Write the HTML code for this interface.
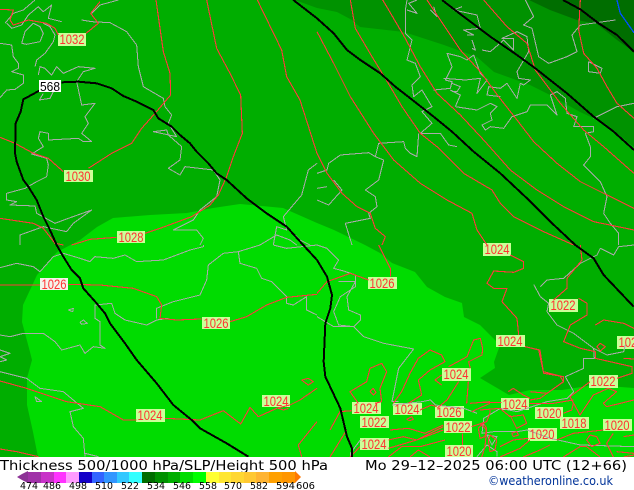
<!DOCTYPE html>
<html><head><meta charset="utf-8"><style>
html,body{margin:0;padding:0;background:#fff;width:634px;height:490px;overflow:hidden}
svg{display:block}
.f{font-family:"Liberation Sans",sans-serif}
.d{font-family:"DejaVu Sans",sans-serif}
.r polyline{fill:none;stroke:#ff3a3a;stroke-width:3.3;stroke-linejoin:round;shape-rendering:crispEdges}
.g polyline{fill:none;stroke:#aaaaaa;stroke-width:3.1;stroke-linejoin:round;shape-rendering:crispEdges}
.k polyline{fill:none;stroke:#000;stroke-width:6;stroke-linejoin:round;shape-rendering:crispEdges}
.l text{fill:#ff3232;font-size:13.5px}
</style></head><body>
<svg width="634" height="490" viewBox="0 0 634 490" xmlns="http://www.w3.org/2000/svg" class="f">
<defs><clipPath id="m"><rect x="0" y="0" width="634" height="457"/></clipPath></defs>
<rect width="634" height="490" fill="#fff"/>
<g clip-path="url(#m)">
<rect width="634" height="457" fill="#00ae00"/>
<polygon fill="#009200" points="295,0 317,8 337,12 352,20 360,27 404,32 444,45 477,57 494,72 530,85 550,95 580,112 604,123 634,147 634,0"/>
<polygon fill="#006e00" points="529,0 550,10 577,20 597,24 617,40 634,52 634,0"/>
<polygon fill="#00dc00" points="80,240 97,227 113,218 150,215 187,213 213,208 240,204 283,208 317,223 334,230 365,245 380,253 392,263 415,272 427,287 445,297 462,303 464,317 480,325 500,345 494,362 495,368 480,378 509,395 530,390 562,390 594,385 634,388 634,457 38,457 33,432 27,405 27,378 32,360 30,352 22,322 23,305 37,275 57,252"/>

<!-- label boxes -->
<g fill="#ccff99">
<rect x="58" y="33" width="28" height="13"/><rect x="64" y="170" width="29" height="12"/><rect x="117" y="231" width="28" height="12"/>
<rect x="40" y="278" width="28" height="12" fill="#f4f4ea"/><rect x="202" y="317" width="28" height="12"/><rect x="136" y="409" width="29" height="13"/>
<rect x="262" y="395" width="28" height="12"/><rect x="368" y="277" width="29" height="12"/><rect x="483" y="243" width="28" height="13"/>
<rect x="549" y="299" width="29" height="13"/><rect x="496" y="335" width="29" height="12"/><rect x="617" y="336" width="17" height="13"/>
<rect x="589" y="375" width="29" height="13"/><rect x="442" y="368" width="29" height="13"/><rect x="352" y="402" width="29" height="12"/>
<rect x="393" y="403" width="29" height="12"/><rect x="360" y="416" width="29" height="12"/><rect x="435" y="406" width="29" height="12"/>
<rect x="501" y="398" width="28" height="12"/><rect x="535" y="407" width="28" height="12"/><rect x="560" y="417" width="29" height="12"/>
<rect x="603" y="419" width="29" height="12"/><rect x="528" y="428" width="29" height="13"/><rect x="444" y="421" width="28" height="12"/>
<rect x="360" y="438" width="29" height="12"/><rect x="445" y="445" width="28" height="12"/>
</g>

<!-- coast Q1 -->
<g class="g" transform="scale(.33333)">
<polyline points="15,70 40,40 70,30 105,0"/>
<polyline points="20,70 35,85 65,75 85,45 115,20 130,35 155,15 145,55 185,65"/>
<polyline points="65,130 75,95 100,70 120,80 130,100 120,125 80,133 65,130"/>
<polyline points="105,200 110,180 135,160 160,125 165,105 150,80 130,70"/>
<polyline points="115,225 120,200 135,205 155,225 170,200 190,220 235,200 285,205 250,215 230,245 245,315 285,310 255,350 265,370 245,400 275,425 250,425 235,415 145,420 145,400 120,395 115,415 130,440 95,462 140,475 145,495 140,530 110,545 75,565 20,580 20,600 50,605 30,615 105,618 110,640 165,670 205,655 275,630 220,670 200,695 130,680 60,705 60,735"/>
<polyline points="0,130 35,135 40,170 55,190 55,205 35,215 70,225 70,250 45,268 20,270 0,293"/>
<polyline points="130,280 118,300 150,295 160,275"/>
<polyline points="245,60 275,65 330,68 380,95 410,135 415,200 430,260 490,295 495,320 515,345 505,370 530,410 460,395 500,390 505,405 545,440 540,480 505,505 540,525 555,500 640,510 660,540 650,590 600,630 580,660 520,690 590,690 610,715 600,735"/>
<polyline points="275,40 300,15 355,0"/>
<polyline points="951,490 925,510 905,585 850,650 860,690 830,680 820,735"/>
<polyline points="780,735 830,705 870,720 890,735"/>
<polyline points="870,690 900,720 930,735"/>
</g>
<!-- coast Q2 -->
<g class="g" transform="translate(317,0) scale(.33333)">
<polyline points="270,0 265,30 265,100 285,120 270,180 295,190 310,230 285,255 290,290 315,270 345,320 315,335 345,370 310,400 370,400 395,435 420,440"/>
<polyline points="305,400 300,470 280,460 265,445 260,425 185,430 175,470 200,480 185,540 145,570 175,590 180,620 155,640 160,655 85,670 105,735"/>
<polyline points="175,470 155,458 70,465 35,490 30,510 0,520"/>
<polyline points="50,540 75,570 35,615 0,600"/><polyline points="0,565 30,560"/>
<polyline points="270,30 300,40 275,10 300,0"/><polyline points="340,30 360,50 350,20"/>
<polyline points="350,270 400,265 405,245 385,240 405,200 390,160 430,170 450,180 470,165"/>
<polyline points="405,250 430,260 420,275 405,275"/>
<polyline points="415,320 430,285 400,270"/>
<polyline points="415,320 480,330 520,310 540,320 520,340 525,360 495,375 505,390 520,380 560,385 585,350 630,335 640,315 690,315 720,345 700,285 720,275 745,295 750,340 780,350 770,380 830,380 830,395 805,400 820,440 820,470 800,495 850,545 870,590 860,640 880,670 905,700 905,735"/>
<polyline points="435,20 410,30 480,45 490,85 440,90 470,105 450,105"/>
<polyline points="465,120 475,150 465,145"/>
<polyline points="495,150 520,155 560,120 590,150 590,115 555,115 600,95 630,110 635,155 600,215 605,235 640,240 620,255 610,250 600,295 570,250 550,265 515,260 510,285 550,290"/>
<polyline points="470,165 490,220 510,240 480,280 490,235 445,240 380,235"/>
<polyline points="625,0 650,50 620,75 645,85 665,170 695,190 750,170 780,155 765,105 790,75 860,65 895,60"/>
<polyline points="830,355 900,320 951,310"/>
<polyline points="815,185 815,215 850,220 855,205 815,185"/>
</g>
<!-- coast Q3 -->
<g class="g" transform="translate(0,245) scale(.33333)">
<polyline points="0,68 50,55 100,65 120,80 160,35 190,25 240,40 270,50 285,35 340,40 375,30 410,50 490,45 570,15 610,5 610,0"/>
<polyline points="0,270 30,275 70,265 130,265 165,290 185,315 240,300 255,325 280,305 315,310 300,300 300,230 285,220 285,180 335,175 345,205 375,225 440,240 470,225 505,220"/>
<polyline points="470,220 470,190 520,170 600,150 620,105 625,60 670,25 715,20 720,55 770,70 785,100 815,110 860,155 860,175 880,180 920,155 920,195 951,210"/>
<polyline points="205,195 220,190 218,200 205,195"/><polyline points="240,232 250,225 262,235 245,238 240,232"/>
<polyline points="0,315 30,325 0,335 20,345 0,350"/>
<polyline points="0,380 80,400 120,430 190,440 250,490 210,500 220,545 250,580 255,635"/>
<polyline points="105,455 125,470 110,470 105,455"/><polyline points="255,625 295,635"/>
<polyline points="715,20 780,0"/><polyline points="820,0 860,10 951,0"/>
</g>
<!-- coast Q4 -->
<g class="g" transform="translate(317,245) scale(.33333)">
<polyline points="0,215 50,245 110,245 130,225 130,210 95,195 90,155 115,110 65,110"/>
<polyline points="0,0 30,10 65,45 50,70 80,78 115,90 115,125 70,155 50,200 65,240 110,245 140,275 200,295 290,312 245,370 225,470 245,470"/>
<polyline points="650,118 670,155 695,175 690,200 720,240 770,265 830,310 832,340 800,340 800,370 745,395 770,440 750,460 690,470 600,500 550,490 500,520 495,565 530,560 600,560 630,555 700,580 790,600 951,605"/>
<polyline points="480,635 510,600 540,620 540,635"/>
<polyline points="670,125 690,105 740,100 790,55 840,30 850,10 890,30 905,5 951,0"/>
<polyline points="830,310 870,330 920,320 925,300"/>
<polyline points="225,480 315,470 340,465 355,480 440,490 480,505"/>
<polyline points="130,585 100,625 100,635"/><polyline points="510,570 525,600 540,575 510,570"/>
</g>

<!-- red Q1 -->
<g class="r" transform="scale(.33333)">
<polyline points="0,28 40,30 30,60 40,75 85,60 140,70 165,85 175,105"/>
<polyline points="258,100 295,70 272,40 300,5"/>
<polyline points="468,0 490,155 510,220 512,285 465,340 425,385 395,430 335,460 265,505"/>
<polyline points="190,515 145,475 100,460 45,430 0,412"/>
<polyline points="620,0 650,145 690,220 722,285 727,400 700,470 680,530 655,585 630,615 575,650 480,685 435,700"/>
<polyline points="350,712 270,718 215,735"/>
<polyline points="772,0 845,150 860,230 900,300 951,460"/>
<polyline points="0,655 100,670 130,685 165,730 190,735"/>
</g>
<!-- red Q2 -->
<g class="r" transform="translate(317,0) scale(.33333)">
<polyline points="0,95 50,190 100,290 170,400 230,480 310,550 390,600 465,640 480,690 510,735"/>
<polyline points="100,0 115,85 165,170 205,235 255,320 310,400 360,440 440,520 525,570 550,610 590,650 680,695 770,735"/>
<polyline points="197,0 215,30 262,110 310,200 360,280 430,345 500,420 580,510 660,570 740,620 830,665 951,690"/>
<polyline points="330,0 430,150 490,215 545,290 600,360 650,425 720,490 790,545 860,580 951,625"/>
<polyline points="500,0 570,80 630,130 655,210 730,310 800,390 860,440 951,520"/>
<polyline points="790,0 785,90 800,160 840,205 870,260 900,310 951,355"/>
<polyline points="0,460 30,520 75,580 120,620 160,640 175,685 205,710 195,735"/>
</g>
<!-- red Q3 -->
<g class="r" transform="translate(0,245) scale(.33333)">
<polyline points="0,120 120,120"/>
<polyline points="205,118 300,120 400,130 470,155 485,180 480,220 530,225 605,222"/>
<polyline points="690,230 740,215 800,180 860,157 951,148"/>
<polyline points="0,408 80,430 200,470 300,485 370,525 410,525"/>
<polyline points="495,520 600,525 670,497 722,537 750,487 775,515 830,490 870,480 900,465 951,430"/>
<polyline points="835,490 850,495 865,490"/>
<polyline points="0,612 50,620 115,635"/>
<polyline points="951,530 895,600 905,635"/>
<polyline points="905,405 925,400 940,410 925,420 905,405"/>
</g>
<!-- red Q4 -->
<g class="r" transform="translate(317,245) scale(.33333)">
<polyline points="185,0 220,70 220,95"/>
<polyline points="0,145 30,110 100,85 155,105"/>
<polyline points="580,30 620,50 620,70 590,82 530,78 510,115 530,130 570,130 555,170 600,220 605,270"/>
<polyline points="625,305 665,315 680,385 740,395 740,410 690,445 640,440"/>
<polyline points="790,0 795,45 750,100 750,130 710,165"/>
<polyline points="785,160 810,175 810,210 760,240 740,290 790,310 835,320 835,340 945,365 945,385 900,400"/>
<polyline points="835,240 860,225 920,235 951,250"/>
<polyline points="850,295 865,305 850,318 840,305 850,295"/>
<polyline points="951,342 920,340"/>
<polyline points="395,365 450,335 470,285 490,280 497,310 495,330 455,350 460,370"/>
<polyline points="425,410 390,465 360,490"/>
</g>
<!-- red zoom 7 -->
<g class="r" transform="translate(330,340) scale(.33333)">
<polyline points="0,270 30,215 65,212"/>
<polyline points="85,190 60,155 110,125 120,85 155,70 170,95 150,145 155,185 135,190"/>
<polyline points="120,155 130,145 138,158 130,165 120,155"/>
<polyline points="190,190 215,155 240,100 265,55 300,30 335,45 345,65 300,90 265,120 275,165 235,190"/>
<polyline points="335,105 315,120 335,135"/>
<polyline points="415,125 410,190"/>
<polyline points="175,325 260,300 340,270"/>
<polyline points="180,270 235,265 285,280 340,255"/>
<polyline points="175,300 220,290 260,300 340,260"/>
<polyline points="240,351 265,330 300,351"/>
<polyline points="175,351 215,320 270,320 345,300"/>
<polyline points="398,280 398,315"/>
<polyline points="425,215 480,190"/>
<polyline points="425,260 470,245 480,220 480,210"/>
<polyline points="445,265 460,250 470,265 465,290 450,295 445,265"/>
<polyline points="230,238 245,230 250,238 238,242 230,238"/>
<polyline points="270,210 305,195 320,200"/>
<polyline points="420,190 480,185"/>
<polyline points="0,351 50,270"/>
<polyline points="90,320 60,351"/>
</g>
<!-- red zoom 8 -->
<g class="r" transform="translate(480,340) scale(.33333)">
<polyline points="135,20 180,30 190,95 240,108 250,125 215,150 180,175 150,180"/>
<polyline points="330,125 270,170 300,225 340,165 385,145 410,155 370,190 380,200 462,180"/>
<polyline points="0,187 65,187"/>
<polyline points="148,190 220,190 280,180"/>
<polyline points="85,155 100,145 130,165 150,175"/>
<polyline points="0,210 60,205 90,230 130,225 140,250 110,265 90,225"/>
<polyline points="0,250 20,270 15,320 5,351"/>
<polyline points="30,285 50,300 45,330 30,335 25,300 30,285"/>
<polyline points="230,300 280,280 370,270"/>
<polyline points="330,285 350,290 360,310 335,320 320,300 330,285"/>
<polyline points="400,280 380,310 400,351"/>
<polyline points="430,290 462,285"/>
<polyline points="60,351 120,325 150,300"/>
<polyline points="130,351 180,330 210,315"/>
<polyline points="250,351 300,320 320,320 360,351"/>
<polyline points="95,280 110,275 115,285 100,290 95,280"/>
<polyline points="410,335 462,340"/><polyline points="430,351 462,345"/>
<polyline points="60,320 100,300 145,295"/>
<polyline points="250,220 275,210 280,190"/>
</g>

<!-- black -->
<g class="k" transform="scale(.33333)">
<polyline points="118,272 70,298 62,335 47,370 45,460 50,485 70,540 85,560 110,600 130,650 150,690 170,735 190,770 215,810 240,835 250,865 290,910 315,940 330,970 375,1030 410,1080 470,1150 520,1215 575,1260 600,1285 680,1330 745,1370"/>
<polyline points="185,247 235,245 290,250 335,265 370,288 410,305 460,330 475,355 515,380 540,405 570,430 590,455 625,490 650,520 680,540 740,595 800,640 860,680 905,730 951,780 981,830 996,885 991,925 976,970 971,1085 976,1130 1021,1225 1041,1310 1056,1345 1056,1372"/>
<polyline points="880,0 951,55 1001,100 1041,150 1081,180 1141,220 1186,260 1231,295 1301,350 1356,395 1421,455 1501,520 1581,595 1651,665 1726,735 1781,775 1811,825 1901,920"/>
<polyline points="1326,0 1391,50 1471,110 1551,165 1606,205 1701,280 1781,350 1841,395 1902,450"/>
</g>
<g transform="translate(317,0) scale(.33333)" fill="none" shape-rendering="crispEdges">
<polyline points="738,0 790,28 845,70 900,105 951,155" stroke="#000" stroke-width="6"/>
<polyline points="900,0 910,40 951,98" stroke="#0050ff" stroke-width="4"/>
</g>

<rect x="39" y="80" width="22" height="12" fill="#fff"/>
<text x="40" y="91" font-size="13" fill="#000" textLength="20" lengthAdjust="spacingAndGlyphs">568</text>

<g class="l">
<text x="59.5" y="44" textLength="25" lengthAdjust="spacingAndGlyphs">1032</text>
<text x="65.5" y="181" textLength="25" lengthAdjust="spacingAndGlyphs">1030</text>
<text x="118.5" y="242" textLength="25" lengthAdjust="spacingAndGlyphs">1028</text>
<text x="41.5" y="289" textLength="25" lengthAdjust="spacingAndGlyphs">1026</text>
<text x="203.5" y="328" textLength="25" lengthAdjust="spacingAndGlyphs">1026</text>
<text x="137.5" y="420" textLength="25" lengthAdjust="spacingAndGlyphs">1024</text>
<text x="263.5" y="406" textLength="25" lengthAdjust="spacingAndGlyphs">1024</text>
<text x="369.5" y="288" textLength="25" lengthAdjust="spacingAndGlyphs">1026</text>
<text x="484.5" y="254" textLength="25" lengthAdjust="spacingAndGlyphs">1024</text>
<text x="550.5" y="310" textLength="25" lengthAdjust="spacingAndGlyphs">1022</text>
<text x="497.5" y="346" textLength="25" lengthAdjust="spacingAndGlyphs">1024</text>
<text x="618.5" y="347" textLength="25" lengthAdjust="spacingAndGlyphs">1022</text>
<text x="590.5" y="386" textLength="25" lengthAdjust="spacingAndGlyphs">1022</text>
<text x="443.5" y="379" textLength="25" lengthAdjust="spacingAndGlyphs">1024</text>
<text x="353.5" y="413" textLength="25" lengthAdjust="spacingAndGlyphs">1024</text>
<text x="394.5" y="414" textLength="25" lengthAdjust="spacingAndGlyphs">1024</text>
<text x="361.5" y="427" textLength="25" lengthAdjust="spacingAndGlyphs">1022</text>
<text x="436.5" y="417" textLength="25" lengthAdjust="spacingAndGlyphs">1026</text>
<text x="502.5" y="409" textLength="25" lengthAdjust="spacingAndGlyphs">1024</text>
<text x="536.5" y="418" textLength="25" lengthAdjust="spacingAndGlyphs">1020</text>
<text x="561.5" y="428" textLength="25" lengthAdjust="spacingAndGlyphs">1018</text>
<text x="604.5" y="430" textLength="25" lengthAdjust="spacingAndGlyphs">1020</text>
<text x="529.5" y="439" textLength="25" lengthAdjust="spacingAndGlyphs">1020</text>
<text x="445.5" y="432" textLength="25" lengthAdjust="spacingAndGlyphs">1022</text>
<text x="361.5" y="449" textLength="25" lengthAdjust="spacingAndGlyphs">1024</text>
<text x="446.5" y="456" textLength="25" lengthAdjust="spacingAndGlyphs">1020</text>
</g>
</g>

<!-- footer -->
<g class="d">
<text x="0" y="470" font-size="13" fill="#000" textLength="328" lengthAdjust="spacingAndGlyphs">Thickness 500/1000 hPa/SLP/Height 500 hPa</text>
<text x="365" y="470" font-size="13" fill="#000" textLength="262" lengthAdjust="spacingAndGlyphs">Mo 29–12–2025 06:00 UTC (12+66)</text>
<text x="488" y="485" font-size="12" fill="#003399" textLength="125" lengthAdjust="spacingAndGlyphs">©weatheronline.co.uk</text>
</g>

<polygon points="17,477 22,474 28,471 28,483 22,480" fill="#8c3296"/>
<g shape-rendering="crispEdges">
<rect x="28" y="472" width="13" height="11" fill="#a032a8"/>
<rect x="41" y="472" width="13" height="11" fill="#c832c8"/>
<rect x="54" y="472" width="12" height="11" fill="#ff32ff"/>
<rect x="66" y="472" width="13" height="11" fill="#ff9bff"/>
<rect x="79" y="472" width="13" height="11" fill="#1400c8"/>
<rect x="92" y="472" width="12" height="11" fill="#3264ff"/>
<rect x="104" y="472" width="13" height="11" fill="#3296ff"/>
<rect x="117" y="472" width="12" height="11" fill="#32c8ff"/>
<rect x="129" y="472" width="13" height="11" fill="#32ffff"/>
<rect x="142" y="472" width="13" height="11" fill="#006c00"/>
<rect x="155" y="472" width="13" height="11" fill="#009000"/>
<rect x="168" y="472" width="12" height="11" fill="#00ae00"/>
<rect x="180" y="472" width="13" height="11" fill="#00dc00"/>
<rect x="193" y="472" width="13" height="11" fill="#00ff00"/>
<rect x="206" y="472" width="13" height="11" fill="#ffff32"/>
<rect x="219" y="472" width="12" height="11" fill="#ffe632"/>
<rect x="231" y="472" width="13" height="11" fill="#ffd732"/>
<rect x="244" y="472" width="12" height="11" fill="#ffc832"/>
<rect x="256" y="472" width="13" height="11" fill="#ffb432"/>
<rect x="269" y="472" width="13" height="11" fill="#ffa000"/>
<rect x="282" y="472" width="13" height="11" fill="#ff9600"/>
</g>
<polygon points="295,471 301,477 295,483" fill="#ff7800"/>
<g class="d" font-size="9.5" fill="#000">
<text x="20" y="489" textLength="18" lengthAdjust="spacingAndGlyphs">474</text>
<text x="43" y="489" textLength="18" lengthAdjust="spacingAndGlyphs">486</text>
<text x="69" y="489" textLength="18" lengthAdjust="spacingAndGlyphs">498</text>
<text x="95" y="489" textLength="18" lengthAdjust="spacingAndGlyphs">510</text>
<text x="121" y="489" textLength="18" lengthAdjust="spacingAndGlyphs">522</text>
<text x="147" y="489" textLength="18" lengthAdjust="spacingAndGlyphs">534</text>
<text x="173" y="489" textLength="18" lengthAdjust="spacingAndGlyphs">546</text>
<text x="199" y="489" textLength="18" lengthAdjust="spacingAndGlyphs">558</text>
<text x="224" y="489" textLength="18" lengthAdjust="spacingAndGlyphs">570</text>
<text x="250" y="489" textLength="18" lengthAdjust="spacingAndGlyphs">582</text>
<text x="276" y="489" textLength="19" lengthAdjust="spacingAndGlyphs">594</text>
<text x="296" y="489" textLength="19" lengthAdjust="spacingAndGlyphs">606</text>
</g>
</svg>
</body></html>
